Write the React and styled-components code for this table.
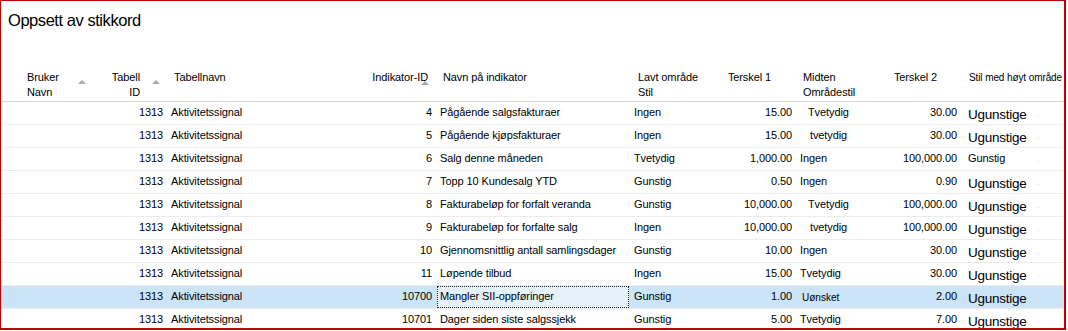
import React from 'react';
import styled, { createGlobalStyle } from 'styled-components';

const Global = createGlobalStyle`
  html, body { margin: 0; padding: 0; background: #fff; }
  body { font-family: "Liberation Sans", Arial, sans-serif; color: #000; }
`;

const COLS = '99px 66px 194px 77px 192px 91px 75px 85px 80px 1fr';

const Frame = styled.div`
  width: 1066px;
  height: 330px;
  box-sizing: border-box;
  border-style: solid;
  border-color: #c00000;
  border-width: 1px 2px 2px 1px;
  overflow: hidden;
  background: #fff;
`;

const Title = styled.h1`
  margin: 0;
  height: 65px;
  box-sizing: border-box;
  padding: 10px 0 0 7px;
  font-weight: normal;
  font-size: 16.5px;
  line-height: 19px;
  letter-spacing: -0.45px;
`;

const HeaderRow = styled.div`
  display: grid;
  grid-template-columns: ${COLS};
  height: 36px;
  box-sizing: border-box;
  border-bottom: 1px solid #d6d6d6;
`;

const HeaderCell = styled.div`
  position: relative;
  box-sizing: border-box;
  padding: 4px ${p => p.$pr || 0}px 0 ${p => p.$pl || 0}px;
  text-align: ${p => (p.$right ? 'right' : 'left')};
  font-size: ${p => (p.$small ? 10 : 11)}px;
  line-height: 15px;
  letter-spacing: -0.1px;
  white-space: nowrap;
`;

const SortArrow = styled.span`
  position: absolute;
  left: ${p => p.$left}px;
  top: ${p => p.$top || 14}px;
  width: 0;
  height: 0;
  border-left: 4.5px solid transparent;
  border-right: 4.5px solid transparent;
  border-bottom: 4px solid #a9a9a9;
`;

const Body = styled.div`
  display: flex;
  flex-direction: column;
`;

const Row = styled.div`
  display: grid;
  grid-template-columns: ${COLS};
  height: 23px;
  flex: none;
  box-sizing: border-box;
  border-bottom: 1px solid #ebebeb;
  background: ${p => (p.$selected ? '#cce4f7' : '#fff')};
`;

const Cell = styled.div`
  position: relative;
  box-sizing: border-box;
  height: 22px;
  padding: ${p => p.$pt || 0}px ${p => p.$pr || 0}px 0 ${p => p.$pl || 0}px;
  text-align: ${p => (p.$right ? 'right' : 'left')};
  font-size: ${p => p.$size || 11}px;
  letter-spacing: ${p => (p.$size === 13.5 ? -0.25 : p.$size === 10 ? 0 : -0.1)}px;
  line-height: 20px;
  white-space: nowrap;
  overflow: ${p => (p.$open ? 'visible' : 'hidden')};
  background: ${p => (p.$focus ? '#e5f1fb' : 'transparent')};
  outline: ${p => (p.$focus ? '1px dotted #222' : 'none')};
  outline-offset: -1px;
`;

const Dot = styled.span`
  position: absolute;
  left: 78px;
  top: 13px;
  width: 1px;
  height: 1px;
  background: #c6c6ee;
`;

const rows = [
  { id: 4, name: 'Pågående salgsfakturaer', low: 'Ingen', t1: '15.00', mid: 'Tvetydig', mi: 13, t2: '30.00', high: 'Ugunstige' },
  { id: 5, name: 'Pågående kjøpsfakturaer', low: 'Ingen', t1: '15.00', mid: 'tvetydig', mi: 15, t2: '30.00', high: 'Ugunstige' },
  { id: 6, name: 'Salg denne måneden', low: 'Tvetydig', t1: '1,000.00', mid: 'Ingen', mi: 5, t2: '100,000.00', high: 'Gunstig', smallHigh: true },
  { id: 7, name: 'Topp 10 Kundesalg YTD', low: 'Gunstig', t1: '0.50', mid: 'Ingen', mi: 5, t2: '0.90', high: 'Ugunstige' },
  { id: 8, name: 'Fakturabeløp for forfalt veranda', low: 'Gunstig', t1: '10,000.00', mid: 'Tvetydig', mi: 13, t2: '100,000.00', high: 'Ugunstige' },
  { id: 9, name: 'Fakturabeløp for forfalte salg', low: 'Ingen', t1: '10,000.00', mid: 'tvetydig', mi: 15, t2: '100,000.00', high: 'Ugunstige' },
  { id: 10, name: 'Gjennomsnittlig antall samlingsdager', low: 'Gunstig', t1: '10.00', mid: 'Ingen', mi: 5, t2: '30.00', high: 'Ugunstige' },
  { id: 11, name: 'Løpende tilbud', low: 'Ingen', t1: '15.00', mid: 'Tvetydig', mi: 5, t2: '30.00', high: 'Ugunstige' },
  { id: 10700, name: 'Mangler SII-oppføringer', low: 'Gunstig', t1: '1.00', mid: 'Uønsket', mi: 7, smallMid: true, t2: '2.00', high: 'Ugunstige', selected: true },
  { id: 10701, name: 'Dager siden siste salgssjekk', low: 'Gunstig', t1: '5.00', mid: 'Tvetydig', mi: 5, t2: '7.00', high: 'Ugunstige' },
];

export default function App() {
  return (
    <>
      <Global />
      <Frame>
        <Title>Oppsett av stikkord</Title>
        <HeaderRow>
          <HeaderCell $pl={26}>
            Bruker<br />Navn
            <SortArrow $left={77} />
          </HeaderCell>
          <HeaderCell $right $pr={26}>
            Tabell<br />ID
            <SortArrow $left={52} />
          </HeaderCell>
          <HeaderCell $pl={8}>Tabellnavn</HeaderCell>
          <HeaderCell $right $pr={9}>
            Indikator-ID
            <SortArrow $left={61} $top={15} />
          </HeaderCell>
          <HeaderCell $pl={6}>Navn på indikator</HeaderCell>
          <HeaderCell $pl={9}>Lavt område<br />Stil</HeaderCell>
          <HeaderCell $right $pr={24}>Terskel 1</HeaderCell>
          <HeaderCell $pl={8}>Midten<br />Områdestil</HeaderCell>
          <HeaderCell $right $pr={23}>Terskel 2</HeaderCell>
          <HeaderCell $pl={9} $small>Stil med høyt område</HeaderCell>
        </HeaderRow>
        <Body>
          {rows.map(r => (
            <Row key={r.id} $selected={r.selected}>
              <Cell />
              <Cell $right $pr={3}>1313</Cell>
              <Cell $pl={5}>Aktivitetssignal</Cell>
              <Cell $right $pr={5}>{r.id}</Cell>
              <Cell $pl={3} $focus={r.selected}>{r.name}</Cell>
              <Cell $pl={5}>{r.low}</Cell>
              <Cell $right $pr={3}>{r.t1}</Cell>
              <Cell $pl={r.mi} $size={r.smallMid ? 10 : 11} $pt={r.smallMid ? 2 : 0}>{r.mid}</Cell>
              <Cell $right $pr={3}>{r.t2}</Cell>
              <Cell $pl={8} $size={r.smallHigh ? 11 : 13.5} $pt={r.smallHigh ? 0 : 3} $open>
                {r.high}
                <Dot />
              </Cell>
            </Row>
          ))}
        </Body>
      </Frame>
    </>
  );
}
